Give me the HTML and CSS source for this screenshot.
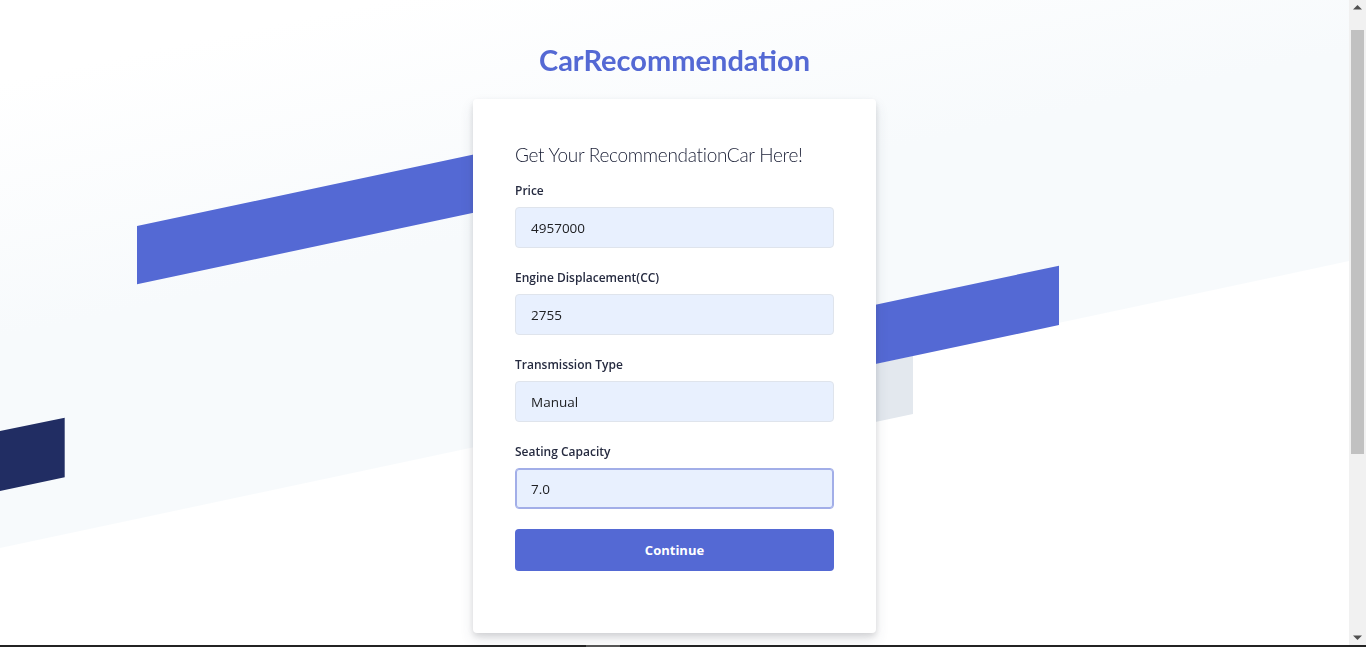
FILE: index.html
```html
<!DOCTYPE html>
<html lang="en">
<head>
<meta charset="utf-8">
<title>CarRecommendation</title>
<link rel="stylesheet" href="styles.css">
</head>
<body>
<div class="backdrop" aria-hidden="true">
  <svg class="backdrop-art" xmlns="http://www.w3.org/2000/svg">
    <defs>
      <linearGradient id="bandFade" gradientUnits="userSpaceOnUse" x1="17" y1="78" x2="69" y2="323">
        <stop offset="0" stop-color="#ffffff"/>
        <stop offset="1" stop-color="#f7fafc"/>
      </linearGradient>
    </defs>
    <polygon points="0,-300 1500,-300 1500,229 0,548" fill="url(#bandFade)"/>
    <polygon points="137,226 600,127.6 600,185.9 137,284.3" fill="#5469d4"/>
    <polygon points="780,384 913,355.7 913,414 780,442.3" fill="#e3e8ee"/>
    <polygon points="780,325 1059,265.7 1059,325 780,384.3" fill="#5469d4"/>
    <polygon points="-20,435.2 64.7,417.7 64.7,477.3 -20,495.3" fill="#212d63"/>
  </svg>
</div>

<main class="page">
  <h1 class="brand">CarRecommendation</h1>
  <section class="card">
    <h2 class="card-title">Get Your RecommendationCar Here!</h2>
    <form class="form">
      <div class="field">
        <label class="field-label" for="price">Price</label>
        <input class="field-input" id="price" type="text" value="4957000">
      </div>
      <div class="field">
        <label class="field-label" for="engine">Engine Displacement(CC)</label>
        <input class="field-input" id="engine" type="text" value="2755">
      </div>
      <div class="field">
        <label class="field-label" for="transmission">Transmission Type</label>
        <input class="field-input" id="transmission" type="text" value="Manual">
      </div>
      <div class="field">
        <label class="field-label" for="seats">Seating Capacity</label>
        <input class="field-input is-focused" id="seats" type="text" value="7.0">
      </div>
      <button class="submit" type="button">Continue</button>
    </form>
  </section>
</main>

<div class="scrollbar" aria-hidden="true">
  <div class="scrollbar-button">
    <svg width="17" height="17" viewBox="0 0 17 17"><polygon points="4,9.5 8.5,5 13,9.5" fill="#505050"/></svg>
  </div>
  <div class="scrollbar-track">
    <div class="scrollbar-thumb"></div>
  </div>
  <div class="scrollbar-button">
    <svg width="17" height="17" viewBox="0 0 17 17"><polygon points="4,7.5 13,7.5 8.5,12" fill="#505050"/></svg>
  </div>
</div>

<div class="screen-edge" aria-hidden="true"></div>
</body>
</html>
```

FILE: styles.css
```css
html,
body {
  height: 100%;
}

body {
  margin: 0;
  overflow: hidden;
  background: #ffffff;
  font-family: "Open Sans", "Liberation Sans", sans-serif;
  color: #1a1f36;
}

.backdrop {
  position: fixed;
  top: 0;
  left: 0;
  right: 17px;
  bottom: 0;
  z-index: 0;
  overflow: hidden;
}

.backdrop-art {
  display: block;
  width: 100%;
  height: 100%;
}

.page {
  position: relative;
  z-index: 1;
  display: flex;
  flex-direction: column;
  align-items: center;
  margin-right: 17px;
  padding: 42px 0 12px;
}

.brand {
  margin: 0;
  font-family: Lato, "Open Sans", sans-serif;
  font-weight: 700;
  font-size: 29px;
  line-height: 36px;
  color: #5469d4;
}

.card {
  margin-top: 21px;
  width: 403px;
  box-sizing: border-box;
  padding: 42px 42px 62px;
  background: #ffffff;
  border-radius: 4px;
  box-shadow: rgba(60, 66, 87, 0.12) 0 7px 14px 0, rgba(0, 0, 0, 0.12) 0 3px 6px 0;
}

.card-title {
  margin: 0 0 12px;
  font-family: Lato, "Open Sans", sans-serif;
  font-weight: 300;
  font-size: 19px;
  letter-spacing: -0.3px;
  line-height: 28px;
  color: #1a1f36;
}

.form {
  display: flex;
  flex-direction: column;
  gap: 20px;
}

.field {
  display: flex;
  flex-direction: column;
  gap: 6px;
}

.field-label {
  font-size: 12px;
  font-weight: 600;
  line-height: 20px;
  color: #262b40;
}

.field-input {
  box-sizing: border-box;
  width: 100%;
  height: 41px;
  margin: 0;
  padding: 0 15px;
  border: 1px solid #dfe4ec;
  border-radius: 4px;
  background: #e8f0fe;
  font-family: "Open Sans", "Liberation Sans", sans-serif;
  font-size: 13.5px;
  color: #202124;
  outline: none;
}

.field-input.is-focused {
  border-color: #a2aee8;
  box-shadow: inset 0 0 0 1px #a2aee8;
}

.submit {
  margin-top: 0;
  height: 42px;
  border: 0;
  border-radius: 4px;
  background: #5469d4;
  color: #ffffff;
  font-family: "Open Sans", "Liberation Sans", sans-serif;
  font-size: 13px;
  font-weight: 700;
  cursor: pointer;
}

.scrollbar {
  position: fixed;
  top: 0;
  right: 0;
  bottom: 2px;
  z-index: 3;
  width: 17px;
  display: flex;
  flex-direction: column;
  background: #f1f1f1;
}

.scrollbar-button {
  flex: none;
  height: 17px;
}

.scrollbar-button svg {
  display: block;
}

.scrollbar-track {
  flex: 1;
  padding-top: 13px;
}

.scrollbar-thumb {
  height: 424px;
  margin: 0 2px;
  background: #c1c1c1;
}

.screen-edge {
  position: fixed;
  left: 0;
  right: 0;
  bottom: 0;
  z-index: 4;
  height: 2px;
  background: linear-gradient(to right, #232323 586px, #555555 586px, #555555 620px, #232323 620px);
}
```
